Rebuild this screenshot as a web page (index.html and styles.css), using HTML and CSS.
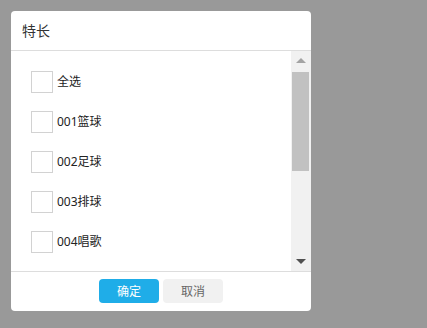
FILE: index.html
```html
<!DOCTYPE html>
<html lang="zh-CN">
<head>
  <meta charset="UTF-8">
  <title>特长</title>
  <link rel="stylesheet" href="styles.css">
</head>
<body>
  <div class="dialog">
    <div class="dialog-header">特长</div>

    <div class="dialog-body">
      <div class="list">
        <label class="item"><input type="checkbox"><span>全选</span></label>
        <label class="item"><input type="checkbox"><span>001篮球</span></label>
        <label class="item"><input type="checkbox"><span>002足球</span></label>
        <label class="item"><input type="checkbox"><span>003排球</span></label>
        <label class="item"><input type="checkbox"><span>004唱歌</span></label>
      </div>
      <div class="scrollbar">
        <div class="scroll-btn"><i class="arrow-up"></i></div>
        <div class="scroll-track"><div class="scroll-thumb"></div></div>
        <div class="scroll-btn"><i class="arrow-down"></i></div>
      </div>
    </div>

    <div class="dialog-footer">
      <button class="btn btn-primary">确定</button>
      <button class="btn">取消</button>
    </div>
  </div>
</body>
</html>
```

FILE: styles.css
```css
* {
  margin: 0;
  padding: 0;
  box-sizing: border-box;
}
html, body {
  height: 100%;
  background: #999;
  font-family: "Noto Sans", "Noto Sans CJK SC", sans-serif;
  color: #333;
}
body {
  padding: 11px;
}

.dialog {
  width: 300px;
  height: 300px;
  background: #fff;
  border-radius: 4px;
  overflow: hidden;
  display: flex;
  flex-direction: column;
}

.dialog-header {
  height: 40px;
  padding: 0 11px 2px;
  border-bottom: 1px solid #ddd;
  display: flex;
  align-items: center;
  font-size: 14px;
  color: #333;
}

.dialog-body {
  flex: 1;
  display: flex;
  min-height: 0;
}
.list {
  flex: 1;
  overflow: hidden;
  padding: 11px 0 0 20px;
}

/* scrollbar */
.scrollbar {
  width: 20px;
  background: #f1f1f1;
  display: flex;
  flex-direction: column;
}
.scroll-btn {
  height: 20px;
  display: flex;
  justify-content: center;
  align-items: center;
}
.scroll-btn:first-child {
  height: 21px;
}
.arrow-up,
.arrow-down {
  width: 0;
  height: 0;
  border-left: 5px solid transparent;
  border-right: 5px solid transparent;
}
.arrow-up {
  border-bottom: 5px solid #a3a3a3;
  margin-bottom: 2px;
}
.arrow-down {
  border-top: 5px solid #505050;
  margin-top: 1px;
}
.scroll-track {
  flex: 1;
  padding: 0 2px 0 1px;
}
.scroll-thumb {
  height: 99px;
  background: #c1c1c1;
}

.item {
  height: 40px;
  display: flex;
  align-items: center;
  gap: 4px;
  font-size: 12px;
  color: #222;
  cursor: pointer;
}
.item input {
  appearance: none;
  -webkit-appearance: none;
  width: 22px;
  height: 22px;
  border: 1px solid #d2d2d2;
  background: #fff;
  margin: 0;
}
.item span {
  margin-top: -3px;
}

.dialog-footer {
  height: 40px;
  border-top: 1px solid #ddd;
  display: flex;
  justify-content: center;
  align-items: flex-start;
  padding-top: 7px;
  gap: 4px;
}

.btn {
  width: 60px;
  height: 24px;
  border: none;
  border-radius: 4px;
  background: #f1f1f1;
  color: #666;
  font-family: "Noto Sans", "Noto Sans CJK SC", sans-serif;
  font-size: 12px;
  cursor: pointer;
}
.btn-primary {
  background: #1fade8;
  color: #fff;
}
```
